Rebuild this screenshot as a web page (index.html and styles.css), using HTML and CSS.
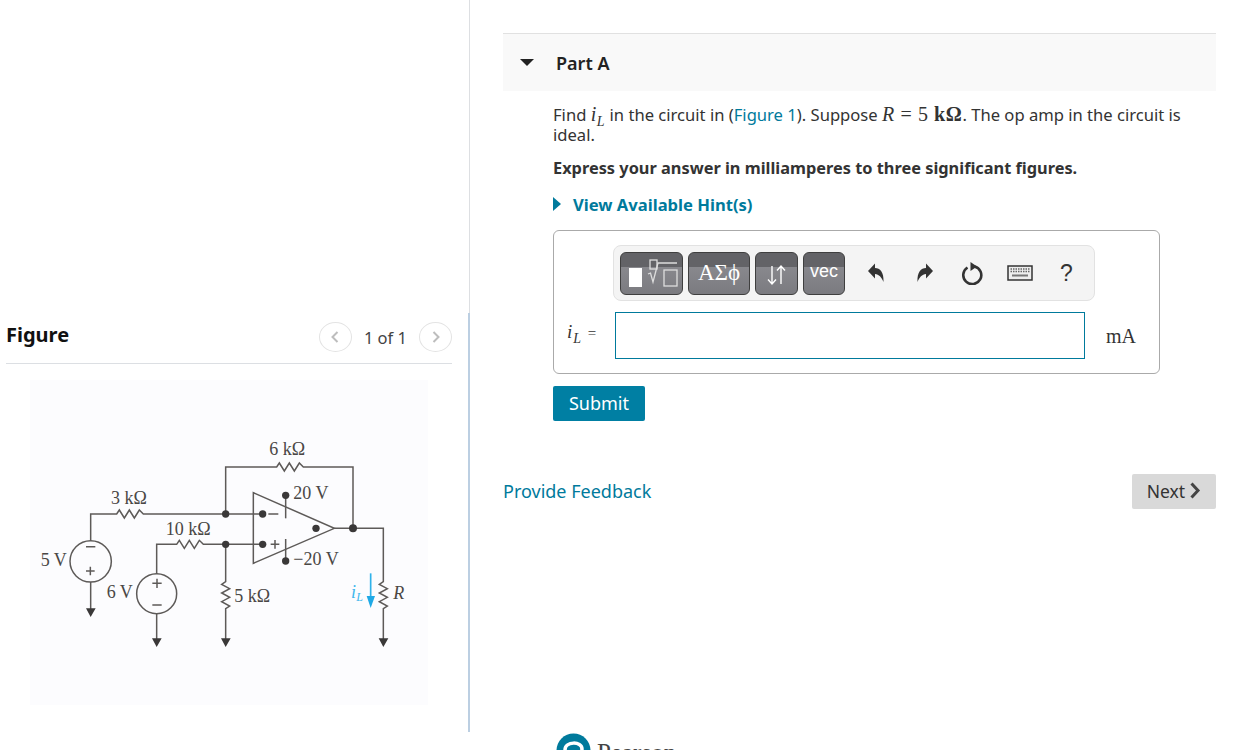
FILE: index.html
```html
<!DOCTYPE html>
<html lang="en">
<head>
<meta charset="utf-8">
<title>Part A</title>
<link rel="stylesheet" href="styles.css">
</head>
<body>
<div class="page">
  <aside class="left">
    <div class="left-top"></div>
    <div class="left-main">
      <div class="fig-head">
        <h2 class="fig-title">Figure</h2>
        <div class="pager">
          <span class="circle"><svg width="10" height="14" viewBox="0 0 10 14"><path d="M7.5 2 L2.5 7 L7.5 12" class="chev"/></svg></span>
          <span class="pager-text">1 of 1</span>
          <span class="circle"><svg width="10" height="14" viewBox="0 0 10 14"><path d="M2.5 2 L7.5 7 L2.5 12" class="chev"/></svg></span>
        </div>
      </div>
      <div class="figure">
        <svg class="circuit" width="398" height="325" viewBox="90 -120 1194 975">
          <g class="wire">
            <path d="M677 282V141H830l8-12 15 24 15-24 15 24 15-24 12 12H1059V325"/>
            <path d="M272 362V282H350l8-12 15 24 15-24 15 24 15-24 12 12H790"/>
            <path d="M470 462V373H530l8-12 15 24 15-24 15 24 15-24 12 12H790"/>
            <path d="M272 486V570"/>
            <path d="M470 581V660"/>
            <path d="M677 373V485l-12 8 24 13-24 13 24 13-24 13 24 13-12 8V660"/>
            <path d="M1003 325H1150V485l-12 8 24 13-24 13 24 13-24 13 24 13-12 8V660"/>
            <path d="M857 226V295"/>
            <path d="M857 357V423"/>
            <path d="M760 218L1003 325L760 430Z"/>
            <circle cx="272" cy="424" r="62"/>
            <circle cx="470" cy="521" r="60"/>
            <path d="M258 380H286M258 453H284M271 440V466M457 490H485M471 476V504M457 555H485M805 282H835M812 373H838M825 360V386"/>
          </g>
          <g class="dots">
            <circle cx="677" cy="282" r="11"/><circle cx="677" cy="373" r="11"/>
            <circle cx="788" cy="282" r="11"/><circle cx="788" cy="373" r="11"/>
            <circle cx="948" cy="325" r="11"/><circle cx="1059" cy="325" r="12"/>
            <circle cx="857" cy="226" r="11"/><circle cx="857" cy="423" r="11"/>
            <path d="M258 565H287L272 591ZM456 655H485L470 681ZM663 655H692L677 681ZM1136 655H1165L1150 681Z"/>
          </g>
          <path class="blue-line" d="M1112 460V530"/>
          <path class="blue-fill" d="M1100 528H1125L1112 564Z"/>
          <g class="ctext">
            <text x="808" y="106">6 kΩ</text>
            <text x="333" y="253">3 kΩ</text>
            <text x="497" y="345">10 kΩ</text>
            <text x="122" y="437">5 V</text>
            <text x="320" y="535">6 V</text>
            <text x="703" y="546">5 kΩ</text>
            <text x="880" y="238">20 V</text>
            <text x="880" y="436">−20 V</text>
            <text x="1180" y="537" class="ital">R</text>
            <text x="1053" y="534" class="ital blue-text">i</text>
            <text x="1069" y="543" class="ital blue-text small">L</text>
          </g>
        </svg>
      </div>
    </div>
  </aside>
  <main class="right">
    <header class="part-head">
      <span class="tri-down"></span>
      <h1 class="part-title">Part A</h1>
    </header>
    <section class="part-body">
      <p class="prompt">Find <span class="math"><i>i</i><sub>L</sub></span> in the circuit in (<a class="link">Figure 1</a>). Suppose <span class="math"><i>R</i> = 5 <span class="bold-k">kΩ</span></span>. The op amp in the circuit is ideal.</p>
      <p class="express">Express your answer in milliamperes to three significant figures.</p>
      <div class="hint"><span class="tri-right"></span><span>View Available Hint(s)</span></div>
      <div class="answer">
        <div class="toolbar-row">
          <div class="toolbar">
            <span class="tb-btn b1">
              <svg width="61" height="41" viewBox="1 1 61 41"><rect x="9" y="16" width="13" height="19" fill="#fff"/><rect x="44" y="18" width="13" height="16" class="sym"/><rect x="30" y="8" width="7" height="9" class="sym"/><path d="M28 22L30.500 21L33 30L38 11H57" class="sym"/></svg>
            </span>
            <span class="tb-btn b2">ΑΣϕ</span>
            <span class="tb-btn b3">
              <svg width="41" height="41" viewBox="1 1 41 41"><path class="sym-w" d="M17 14V32M13 27.500L17 32L21 27.500M26 32V14M22 18.500L26 14L30 18.500"/></svg>
            </span>
            <span class="tb-btn b4">vec</span>
            <svg class="ic ic-undo" width="20" height="22" viewBox="0 0 20 22"><path class="ico" d="M2 9L9 1.500V6C14 6 18 10 17.500 20C15.500 15 13 12.500 9 12V16.500Z"/></svg>
            <svg class="ic ic-redo" width="20" height="22" viewBox="0 0 20 22"><path class="ico" d="M18 9L11 1.500V6C6 6 2 10 2.500 20C4.500 15 7 12.500 11 12V16.500Z"/></svg>
            <svg class="ic ic-reload" width="22" height="24" viewBox="0 0 22 24"><path class="ring" d="M6.500 6.500A9 9 0 1 0 13.500 5.400"/><path class="ico" d="M9.500 1L9.500 10L16 5.500Z"/></svg>
            <svg class="ic ic-kb" width="26" height="16" viewBox="0 0 26 16"><rect x="1" y="1" width="24" height="14" class="kb"/><path class="keys" d="M3.500 4H22.500M3.500 6.500H22.500"/><path class="space" d="M5 10.500H21"/></svg>
            <span class="qm">?</span>
          </div>
        </div>
        <div class="input-row">
          <span class="math ans-label"><i>i</i><sub>L</sub> <span class="eq">=</span></span>
          <div class="input"></div>
          <span class="unit">mA</span>
        </div>
      </div>
      <div class="submit">Submit</div>
    </section>
    <div class="foot-row">
      <a class="feedback">Provide Feedback</a>
      <div class="next">Next<svg width="12" height="17" viewBox="0 0 12 17"><path d="M2.500 1.500 L9 8.500 L2.500 15.500" class="next-chev"/></svg></div>
    </div>
    <div class="logo">
      <svg width="35" height="35" viewBox="0 0 35 35"><circle cx="17.500" cy="17.500" r="17" fill="#007a9c"/><path d="M9 17C9 8 26 8 26 16C26 22 19 21 17 27" fill="none" stroke="#fff" stroke-width="3.500"/></svg>
      <span class="logo-text">Pearson</span>
    </div>
  </main>
</div>
</body>
</html>
```
FILE: styles.css
```css
* { box-sizing: border-box; }
html, body { margin: 0; padding: 0; height: 750px; overflow: hidden; background: #fff; }
body { font-family: "Noto Sans", "Open Sans", sans-serif; color: #333; font-size: 16px; }
.page { display: flex; align-items: flex-start; height: 750px; }

.left { width: 470px; flex: none; }
.left-top { height: 313px; border-right: 1px solid #dddfe2; }
.left-main { height: 419px; padding: 0 16px 0 6px; border-right: 2px solid #bccfe2; }
.fig-head { display: flex; justify-content: space-between; align-items: center; height: 51px; border-bottom: 1px solid #dcdfe3; padding-bottom: 2px; }
.fig-title { margin: 0; padding-bottom: 6px; font-size: 20px; font-weight: 700; color: #111; }
.pager { display: flex; align-items: center; gap: 12px; }
.pager-text { font-size: 16.5px; color: #444; }
.circle { width: 33px; height: 30px; border: 1px solid #e3e3e3; border-radius: 50%; display: flex; align-items: center; justify-content: center; }
.chev { fill: none; stroke: #bdbdbd; stroke-width: 2; }
.figure { padding: 16px 0 0 24px; }
.circuit { display: block; background: #fcfcfe; }
.wire { fill: none; stroke: #5d5a58; stroke-width: 4.5; }
.dots { fill: #3a3838; }
.blue-line { stroke: #2fb2ea; stroke-width: 5; fill: none; }
.blue-fill { fill: #1fa9e6; }
.ctext { font-family: "Liberation Serif", serif; font-size: 54px; fill: #4a4745; }
.ital { font-style: italic; }
.blue-text { fill: #3eb6ec; }
.small { font-size: 36px; }

.right { flex: 1; padding: 33px 37px 0 33px; min-width: 0; }
.part-head { display: flex; align-items: center; height: 58px; background: #f9f9f9; border-top: 1px solid #e1e1e1; padding-left: 17px; }
.tri-down { width: 0; height: 0; border-left: 7px solid transparent; border-right: 7px solid transparent; border-top: 7px solid #222; margin-right: 22px; }
.part-title { margin: 0; font-size: 18px; font-weight: 600; color: #222; }
.part-body { padding: 14px 0 0 50px; }
.prompt { margin: 0; width: 640px; line-height: 20px; font-size: 16.6px; color: #333; }
.math { font-family: "Liberation Serif", serif; font-size: 20px; letter-spacing: .6px; line-height: 0; }
.math sub { font-style: italic; font-size: 14px; line-height: 0; }
.bold-k { font-weight: 700; }
.link { color: #007a9c; }
.express { margin: 13px 0 0; font-weight: 700; font-size: 16.35px; line-height: 20px; color: #333; }
.hint { margin-top: 17px; display: flex; align-items: center; color: #007a9c; font-weight: 700; font-size: 16.6px; line-height: 20px; }
.tri-right { width: 0; height: 0; border-top: 7px solid transparent; border-bottom: 7px solid transparent; border-left: 8px solid #007a9c; margin-right: 12px; margin-top: -3px; }
.answer { margin-top: 15px; width: 607px; height: 144px; border: 1px solid #aaa; border-radius: 6px; padding: 14px 64px 0 13px; }
.toolbar-row { display: flex; justify-content: flex-end; }
.toolbar { width: 482px; height: 56px; background: #f4f4f4; border: 1px solid #e2e2e2; border-radius: 8px; display: flex; align-items: center; padding: 0 6px; gap: 5px; }
.tb-btn { height: 43px; flex: none; border-radius: 6px; background: linear-gradient(#636367 0, #636367 35%, #88888d 35%, #7b7b80 100%); border: 1px solid #3f3f3f; color: #fff; display: flex; align-items: center; justify-content: center; }
.b1 { width: 63px; }
.b2 { width: 62px; font-family: "Liberation Serif", serif; font-size: 23px; }
.b3 { width: 43px; }
.b4 { width: 42px; font-family: "Liberation Sans", sans-serif; font-size: 18px; padding-bottom: 4px; }
.sym { fill: none; stroke: #ddd; stroke-width: 1.3; }
.sym-w { fill: none; stroke: #fff; stroke-width: 1.4; }
.ic { flex: none; }
.ic-undo { margin-left: 16px; }
.ic-redo { margin-left: 24px; }
.ic-reload { margin-left: 21px; }
.ic-kb { margin-left: 19px; }
.ico { fill: #333; }
.ring { fill: none; stroke: #333; stroke-width: 2.6; }
.kb { fill: #eee; stroke: #333; stroke-width: 1.5; }
.keys { stroke: #666; stroke-width: 1.5; stroke-dasharray: 1.500 1; fill: none; }
.space { stroke: #777; stroke-width: 2; fill: none; }
.qm { margin-left: 22px; font-family: "Liberation Sans", sans-serif; font-size: 23px; color: #333; }
.input-row { display: flex; align-items: center; margin-top: 11px; width: 582px; }
.ans-label { width: 48px; font-size: 19px; white-space: nowrap; letter-spacing: 1px; }
.eq { font-size: 15px; }
.input { width: 470px; height: 47px; border: 1px solid #007a9c; background: #fff; flex: none; }
.unit { font-family: "Liberation Serif", serif; font-size: 20px; margin-left: 21px; color: #333; padding-top: 2px; }
.submit { margin-top: 12px; width: 92px; height: 35px; padding-bottom: 2px; background: #007fa3; color: #fff; border-radius: 2px; display: flex; align-items: center; justify-content: center; font-size: 18px; }
.foot-row { display: flex; justify-content: space-between; align-items: center; margin-top: 53px; }
.feedback { color: #007a9c; font-size: 18px; padding-bottom: 2px; }
.next { width: 84px; height: 35px; padding-bottom: 2px; background: #d9d9d9; border-radius: 2px; display: flex; align-items: center; justify-content: center; gap: 4px; font-size: 17.5px; color: #333; }
.next-chev { fill: none; stroke: #444; stroke-width: 3; }
.logo { display: flex; align-items: flex-start; gap: 6px; margin: 224px 0 0 53px; }
.logo-text { font-family: "Liberation Serif", serif; font-size: 25px; line-height: 28px; color: #444; margin-top: 6px; }
```
